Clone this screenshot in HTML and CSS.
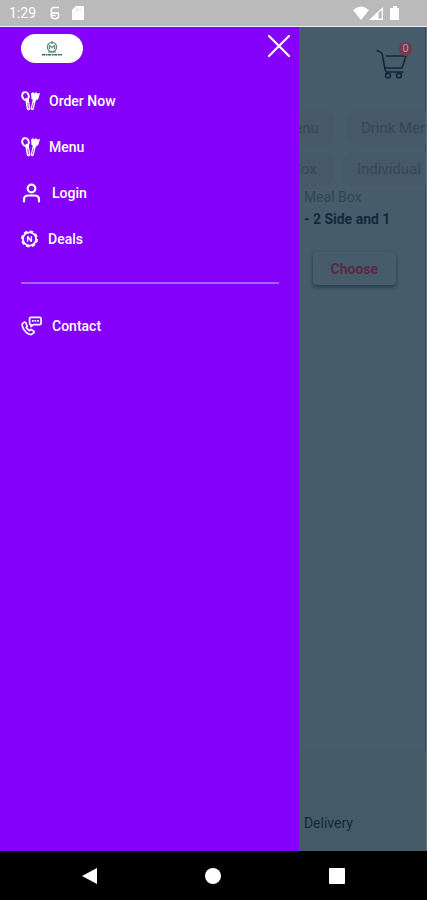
FILE: index.html
```html
<!DOCTYPE html>
<html lang="en">
<head>
  <meta charset="UTF-8" />
  <meta name="viewport" content="width=device-width, initial-scale=1.0"/>
  <title>Menu</title>
  <link rel="stylesheet" href="styles.css">
</head>
<body>

  <!-- Shared icons -->
  <svg class="defs" width="0" height="0">
    <symbol id="cutlery" viewBox="0 0 20 20">
      <ellipse cx="4.500" cy="5" rx="3.200" ry="3.900" transform="rotate(-18 4.500 5)" fill="none" stroke="currentColor" stroke-width="2"/>
      <path d="M6 8.500 7.500 17.500" stroke="currentColor" stroke-width="3.600" stroke-linecap="round"/>
      <path d="M6.800 12 7.500 17" stroke="#8400fb" stroke-width=".7" stroke-linecap="round"/>
      <path d="M10 2.500 12 1 13.300 2.500 15 1 16.300 2.500 19 2 17.500 7.500Q16 10 13.500 9.500L10.500 8Z" fill="currentColor"/>
      <path d="M13.300 9 11.300 17.500" stroke="currentColor" stroke-width="3.200" stroke-linecap="round"/>
      <path d="M12.500 12 11.400 17" stroke="#8400fb" stroke-width=".7" stroke-linecap="round"/>
    </symbol>
  </svg>

  <!-- Phone status bar -->
  <div class="status">
    <span class="time">1:29</span>
    <svg class="status-app" viewBox="0 0 10 14" fill="none" stroke="#fff" stroke-width="1.500">
      <path d="M9 1.500H4Q1.200 1.500 1.200 4.300T4 7H9M1.200 9.500Q1.200 12.700 5 12.700T8.800 9.800Q8.800 7 6 7M1.200 7V9.500H5.500"/>
    </svg>
    <svg class="status-card" viewBox="0 0 12 14">
      <path d="M4 0H11Q12 0 12 1V13Q12 14 11 14H1Q0 14 0 13V4Z" fill="#fff"/>
      <path d="M4.500 2.500V5M6.800 2.500V5M9 2.500V5" stroke="#ddd"/>
    </svg>
    <svg class="status-signal" viewBox="0 0 47 15" fill="#fff">
      <path d="M0 4Q8 -3 16 4L8 14Z"/>
      <path d="M16 14 30 1V14Z"/>
      <path d="M25.500 7 28.700 4V12.500H25.500Z" fill="#bababa"/>
      <path d="M40 0H44V2H46V14H37V2H40Z"/>
    </svg>
  </div>

  <div class="screen">
    <!-- Side drawer -->
    <aside class="drawer">
      <div class="drawer-top">
        <a class="logo" href="#" aria-label="Home">
          <svg viewBox="0 0 22 16">
            <circle cx="11" cy="6" r="4.600" fill="none" stroke="#5f9080" stroke-width="1.400"/>
            <path d="M8.500 8V4.500L11 6.500 13.500 4.500V8M11 0V3" fill="none" stroke="#5f9080" stroke-width="1.200"/>
            <path d="M7 11H15" stroke="#5f9080" stroke-width="1.200"/>
            <path d="M1 13.800H21" stroke="#2f6957" stroke-width="1.600" stroke-dasharray="3 .6 2 .5"/>
          </svg>
        </a>
        <button class="close" type="button" aria-label="Close menu">
          <svg viewBox="0 0 24 24"><path d="M2 2 22 22M22 2 2 22" stroke="#fff" stroke-width="2.200" stroke-linecap="round"/></svg>
        </button>
      </div>

      <nav class="links">
        <a href="#"><svg class="icon"><use href="#cutlery"/></svg>Order Now</a>
        <a href="#"><svg class="icon"><use href="#cutlery"/></svg>Menu</a>
        <a class="wide" href="#">
          <svg class="icon" viewBox="0 0 20 20" fill="none" stroke="currentColor" stroke-width="2.200" stroke-linecap="round">
            <circle cx="10" cy="5.500" r="3.800"/>
            <path d="M2.500 18.500V16.500Q2.500 12.500 7 12.500H13Q17.500 12.500 17.500 16.500V18.500"/>
          </svg>Login</a>
        <a class="deals" href="#">
          <svg class="icon" viewBox="1 1 18 18" fill="none" stroke="currentColor">
            <circle cx="10" cy="10" r="7" stroke-width="2"/>
            <circle cx="10" cy="10" r="8.200" stroke-width="1.600" stroke-dasharray="3.800 2.640"/>
            <path d="M8 7V13M8 7 12 13M12 7V13" stroke-width="1.500"/>
          </svg>Deals</a>
      </nav>
      <hr>
      <nav class="links">
        <a class="wide" href="#">
          <svg class="icon" viewBox="0 0 22 20" fill="none" stroke="currentColor" stroke-width="1.800" stroke-linejoin="round">
            <path d="M10.500 1H19.500Q21 1 21 2.500V7Q21 8.500 19.500 8.500H13L10.500 10.500V8.500Q9 8.500 9 7V2.500Q9 1 10.500 1Z"/>
            <path d="M11.500 4.700H13.300M14.200 4.700H16M17 4.700H18.800"/>
            <path d="M3.500 6 1.500 7.500Q.5 10 3.500 14.500 7 19 10.500 19L13.500 17Q14 16 13 15.200L10.500 13.500 8.800 14.800Q6.500 13.500 5.500 11.500L6.500 10 5 6.800Q4.500 5.500 3.500 6Z"/>
          </svg>Contact</a>
      </nav>
    </aside>

    <!-- Dimmed shop page -->
    <main class="shop">
      <header class="shop-top">
        <a class="cart" href="#" aria-label="Cart">
          <svg viewBox="0 0 34 32" fill="none" stroke="#102a3c" stroke-width="1.600" stroke-linecap="round" stroke-linejoin="round">
            <path d="M1 2.500 5 4.500Q6 5 6.300 6.500L8.800 20Q9.300 24 11 24H27M10 8H30L26 20H9"/>
            <circle cx="12" cy="27.500" r="2.400"/>
            <circle cx="23" cy="27.500" r="2.400"/>
          </svg>
          <span class="count">0</span>
        </a>
      </header>
      <div class="chips">
        <a class="chip cut" href="#">Menu</a>
        <a class="chip" href="#">Drink Menu</a>
      </div>
      <div class="chips second">
        <a class="chip cut" href="#">Box</a>
        <a class="chip" href="#">Individual</a>
      </div>
      <section class="product">
        <p class="category">Meal Box</p>
        <p class="name">- 2 Side and 1</p>
        <button class="choose" type="button">Choose</button>
      </section>
      <footer class="delivery">Delivery</footer>
    </main>
  </div>

  <!-- Phone navigation -->
  <div class="phone-nav">
    <button type="button" aria-label="Back"><svg viewBox="0 0 18 18"><path d="M1 9 16 1V17Z"/></svg></button>
    <button type="button" aria-label="Home"><svg viewBox="0 0 18 18"><circle cx="9" cy="9" r="8"/></svg></button>
    <button type="button" aria-label="Recent"><svg viewBox="0 0 18 18"><rect x="1" y="1" width="16" height="16" rx="1"/></svg></button>
  </div>

</body>
</html>
```
FILE: styles.css
```css
* {
  box-sizing: border-box;
}

body {
  margin: 0;
  min-height: 100vh;
  display: flex;
  flex-direction: column;
  font-family: Roboto, sans-serif;
  font-size: 14px;
  line-height: 20px;
  background: #000;
}

a {
  color: inherit;
  text-decoration: none;
}

button {
  font: inherit;
  border: 0;
  padding: 0;
  background: none;
  cursor: pointer;
}

svg {
  display: block;
}

.defs {
  position: absolute;
}

/* status bar */
.status {
  height: 27px;
  display: flex;
  align-items: center;
  padding: 0 27px 0 9px;
  background: #bababa;
  border-bottom: 1px solid #f4eaff;
  color: #fff;
}

.status-app {
  width: 10px;
  height: 14px;
  margin-left: 14px;
}

.status-card {
  width: 12px;
  height: 14px;
  margin-left: 12px;
}

.status-signal {
  width: 47px;
  height: 15px;
  margin-left: auto;
}

.screen {
  flex: 1;
  display: grid;
  grid-template-columns: 70% 1fr;
}

/* drawer */
.drawer {
  background: #8400fb;
  color: #fff;
  padding: 7px 8px 0 21px;
}

.drawer-top {
  display: flex;
  justify-content: space-between;
  align-items: flex-start;
  margin-bottom: 15px;
}

.logo {
  width: 62px;
  height: 29px;
  border-radius: 15px;
  background: #fff;
  display: flex;
  justify-content: center;
  align-items: center;
}

.logo svg {
  width: 22px;
  height: 16px;
}

.close svg {
  width: 24px;
  height: 24px;
}

.links a {
  display: flex;
  align-items: center;
  gap: 8px;
  height: 46px;
  font-weight: 500;
}

.links .wide,
.links .deals {
  gap: 10px;
}

.icon {
  width: 20px;
  height: 20px;
}

.wide .icon {
  width: 21px;
}

.deals .icon {
  width: 17px;
}

hr {
  margin: 20px 12px 19px 0;
  border: 0;
  height: 2px;
  background: #a960ff;
}

/* shop page */
.shop {
  min-width: 0;
  display: flex;
  flex-direction: column;
  background: #475c6b;
  border-right: 1px solid #5b7080;
  box-shadow: inset -1px 0 #354b5b;
  color: #102a3c;
  overflow: hidden;
}

.shop-top {
  height: 84px;
  padding: 20px 14px 0 0;
  display: flex;
  justify-content: flex-end;
}

.cart {
  position: relative;
  width: 36px;
  height: 34px;
}

.cart svg {
  width: 34px;
  height: 34px;
}

.count {
  position: absolute;
  top: -5px;
  right: 0;
  width: 13px;
  height: 14px;
  border-radius: 7px;
  background: #79374f;
  color: #a2a0ac;
  font-size: 11px;
  line-height: 14px;
  text-align: center;
}

.chips {
  display: flex;
  gap: 12px;
  margin-bottom: 7px;
  color: #344958;
  font-size: 15px;
}

.chips.second {
  gap: 10px;
  margin-bottom: 0;
}

.chip {
  flex: none;
  height: 34px;
  padding: 7px 14px;
  border-radius: 10px;
  background: #455967;
}

.chip.cut {
  width: 36px;
  padding-right: 16px;
  display: flex;
  justify-content: flex-end;
  overflow: hidden;
  border-radius: 0 10px 10px 0;
}

.second .cut {
  width: 34px;
}

.product {
  padding: 1px 5px;
}

.product p {
  margin: 0;
}

.category {
  color: #304756;
}

.product .name {
  margin-top: 2px;
  font-weight: 700;
}

.choose {
  display: block;
  width: 83px;
  height: 33px;
  margin: 23px 0 0 9px;
  border-radius: 4px;
  background: #475c6b;
  box-shadow: 0 2px 4px #22394a;
  color: #572945;
  font-size: 14px;
  font-weight: 700;
}

.delivery {
  margin-top: auto;
  height: 100px;
  padding: 62px 5px 0;
  background: #455a67;
}

/* phone navigation */
.phone-nav {
  height: 49px;
  padding: 0 28px;
  display: flex;
  align-items: center;
  justify-content: space-around;
}

.phone-nav svg {
  width: 18px;
  height: 18px;
  fill: #fff;
}
```
